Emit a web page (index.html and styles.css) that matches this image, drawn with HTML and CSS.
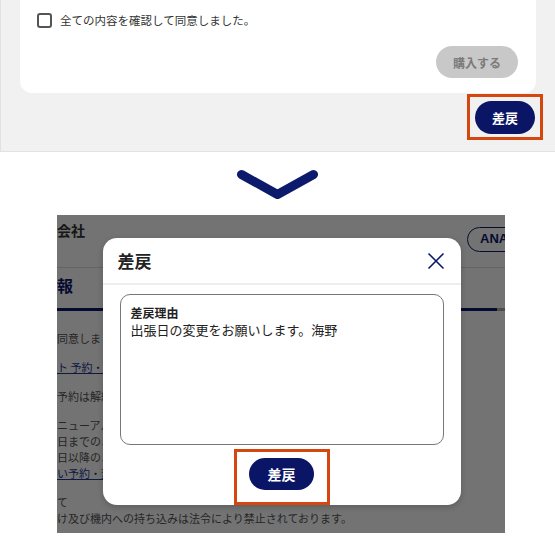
FILE: index.html
```html
<!DOCTYPE html>
<html lang="ja">
<head>
    <meta charset="UTF-8">
    <meta name="viewport" content="width=device-width, initial-scale=1.0">
    <title>差戻</title>
    <link rel="stylesheet" href="styles.css">
</head>
<body>
    <div class="top-panel">
        <div class="card">
            <label class="agree">
                <span class="checkbox"></span>
                <span>全ての内容を確認して同意しました。</span>
            </label>
            <div class="card-actions">
                <button class="buy-btn" disabled>購入する</button>
            </div>
        </div>
        <div class="panel-actions">
            <div class="highlight">
                <button class="navy-btn">差戻</button>
            </div>
        </div>
    </div>

    <div class="arrow">
        <svg width="555" height="63" viewBox="0 0 555 63">
            <polyline points="241.5,22.5 277.5,42.5 313.5,22.5" fill="none" stroke="#0c1a6b" stroke-width="9" stroke-linecap="round" stroke-linejoin="round"/>
        </svg>
    </div>

    <div class="shot">
        <div class="shot-page">
            <div class="shot-head">
                <span class="company">会社</span>
                <span class="ana-pill">ANA</span>
            </div>
            <div class="shot-title">報</div>
            <div class="tab-line"><span class="tab-on"></span><span class="tab-off"></span></div>
            <p>同意しました。</p>
            <p class="link">ト 予約・変更</p>
            <p>予約は解約されます。</p>
            <p>ニューアルのお知らせ<br>日までのご予約<br>日以降のご予約<br><span class="link">い予約・変更</span></p>
            <p>て<br>け及び機内への持ち込みは法令により禁止されております。</p>
        </div>
        <div class="overlay">
            <div class="modal">
                <div class="modal-head">
                    <span class="modal-title">差戻</span>
                    <svg class="close" width="18" height="18" viewBox="0 0 18 18">
                        <path d="M1.5 1.5 L16.5 16.5 M16.5 1.5 L1.5 16.5" stroke="#0c1a6b" stroke-width="1.6" fill="none"/>
                    </svg>
                </div>
                <div class="modal-body">
                    <div class="reason-box">
                        <div class="reason-label">差戻理由</div>
                        <div class="reason-text">出張日の変更をお願いします。海野</div>
                    </div>
                    <div class="highlight modal-highlight">
                        <button class="navy-btn">差戻</button>
                    </div>
                </div>
            </div>
        </div>
    </div>
</body>
</html>
```

FILE: styles.css
```css
body {
    margin: 0;
    width: 555px;
    font-family: "Noto Sans CJK JP", "Noto Sans", sans-serif;
    background: white;
    color: #333;
}
button {
    font-family: inherit;
    border: none;
}
.top-panel {
    height: 152px;
    box-sizing: border-box;
    background: #f1f1f1;
    border-left: 1px solid #e2e2e2;
    border-bottom: 1px solid #e2e2e2;
    padding: 0 19px 0 19px;
}
.card {
    height: 93px;
    box-sizing: border-box;
    background: white;
    border-radius: 0 0 12px 12px;
    padding: 12px 18px 15px 17px;
    display: flex;
    flex-direction: column;
}
.agree {
    display: flex;
    align-items: center;
    gap: 8px;
    font-size: 11.5px;
    color: #333;
}
.checkbox {
    width: 15px;
    height: 15px;
    box-sizing: border-box;
    border: 2px solid #555;
    border-radius: 3px;
}
.card-actions {
    margin-top: auto;
    display: flex;
    justify-content: flex-end;
}
.buy-btn {
    width: 82px;
    height: 32px;
    border-radius: 16px;
    background: #c8c8c8;
    color: #7a7a7a;
    font-size: 12px;
    font-weight: bold;
}
.panel-actions {
    display: flex;
    justify-content: flex-end;
    margin-right: -7px;
    margin-top: 1px;
}
.highlight {
    width: 76px;
    height: 46px;
    box-sizing: border-box;
    border: 3px solid #d6470f;
    display: flex;
    justify-content: center;
    padding-top: 4px;
}
.navy-btn {
    width: 60px;
    height: 33px;
    border-radius: 17px;
    background: #0b1566;
    color: white;
    font-size: 13px;
    font-weight: bold;
}
.arrow {
    height: 63px;
}
.arrow svg {
    display: block;
}
.shot {
    position: relative;
    width: 448px;
    height: 318px;
    margin-left: 57px;
    overflow: hidden;
    background: white;
}
.shot-page {
    font-size: 11px;
    color: #555;
}
.shot-head {
    height: 52px;
    border-bottom: 1px solid #dcdcdc;
    display: flex;
    justify-content: space-between;
    align-items: flex-start;
}
.company {
    margin-top: 5px;
    font-size: 14px;
    font-weight: bold;
    color: #333;
}
.ana-pill {
    margin-top: 12px;
    margin-right: -26px;
    width: 64px;
    height: 25px;
    box-sizing: border-box;
    border: 1.5px solid #0c1a6b;
    border-radius: 13px;
    padding-left: 12px;
    font-family: "Liberation Sans", sans-serif;
    font-size: 13px;
    font-weight: bold;
    line-height: 22px;
    color: #0c1a6b;
}
.shot-title {
    height: 40px;
    padding-top: 5px;
    box-sizing: border-box;
    font-size: 16px;
    font-weight: bold;
    color: #0c1a6b;
}
.tab-line {
    display: flex;
    height: 3px;
}
.tab-on {
    width: 440px;
    background: #0c1a6b;
}
.tab-off {
    flex: 1;
    background: #aaa;
}
.shot-page p {
    margin: 0 0 13px;
    line-height: 16px;
}
.shot-page p:first-of-type {
    margin-top: 19px;
}
.shot-page .link {
    color: #1f3a93;
    text-decoration: underline;
}
.overlay {
    position: absolute;
    inset: 0;
    background: rgba(0, 0, 0, 0.55);
    display: flex;
    justify-content: center;
    align-items: flex-start;
    padding-top: 23px;
    padding-left: 1px;
}
.modal {
    width: 358px;
    height: 267px;
    background: white;
    border-radius: 14px;
    box-shadow: 0 2px 6px rgba(0, 0, 0, 0.2);
    display: flex;
    flex-direction: column;
}
.modal-head {
    height: 48px;
    border-bottom: 2px solid #eee;
    display: flex;
    align-items: center;
    justify-content: space-between;
    padding: 0 16px 0 15px;
}
.modal-title {
    font-size: 17px;
    font-weight: bold;
    color: #222;
}
.modal-body {
    display: flex;
    flex-direction: column;
    align-items: center;
    padding-top: 9px;
}
.reason-box {
    width: 324px;
    height: 151px;
    box-sizing: border-box;
    border: 1.5px solid #777;
    border-radius: 10px;
    padding: 9px 10px;
    color: #222;
}
.reason-label {
    font-size: 12px;
    font-weight: bold;
    line-height: 17px;
}
.reason-text {
    font-size: 13px;
    line-height: 17px;
}
.modal-highlight {
    width: 96px;
    height: 56px;
    margin-top: 4px;
    padding-top: 6px;
}
.modal-highlight .navy-btn {
    width: 65px;
    height: 32px;
    font-size: 14px;
}
```
